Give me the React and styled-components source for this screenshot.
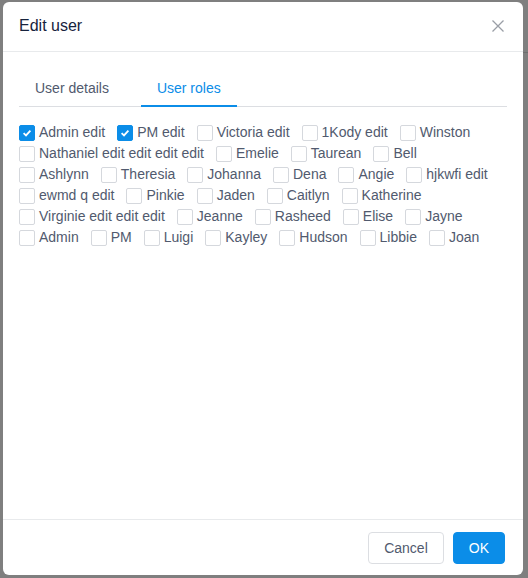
import React from 'react';
import styled, { createGlobalStyle } from 'styled-components';

const roles = [
    { name: 'Admin edit', checked: true },
    { name: 'PM edit', checked: true },
    { name: 'Victoria edit' },
    { name: '1Kody edit' },
    { name: 'Winston' },
    { name: 'Nathaniel edit edit edit edit' },
    { name: 'Emelie' },
    { name: 'Taurean' },
    { name: 'Bell' },
    { name: 'Ashlynn' },
    { name: 'Theresia' },
    { name: 'Johanna' },
    { name: 'Dena' },
    { name: 'Angie' },
    { name: 'hjkwfi edit' },
    { name: 'ewmd q edit' },
    { name: 'Pinkie' },
    { name: 'Jaden' },
    { name: 'Caitlyn' },
    { name: 'Katherine' },
    { name: 'Virginie edit edit edit' },
    { name: 'Jeanne' },
    { name: 'Rasheed' },
    { name: 'Elise' },
    { name: 'Jayne' },
    { name: 'Admin' },
    { name: 'PM' },
    { name: 'Luigi' },
    { name: 'Kayley' },
    { name: 'Hudson' },
    { name: 'Libbie' },
    { name: 'Joan' },
];

const App = () => {
    return (
        <Page>
            <GlobalStyle />
            <Modal>
                <Header>
                    <Title>Edit user</Title>
                    <Close aria-label="close">
                        <svg width="14" height="14" viewBox="0 0 14 14">
                            <path d="M1.5 1.5 L12.5 12.5 M12.5 1.5 L1.5 12.5" stroke="#9a9ea6" strokeWidth="1.3" fill="none" />
                        </svg>
                    </Close>
                </Header>
                <Body>
                    <Tabs>
                        <Tab>User details</Tab>
                        <Tab active>User roles</Tab>
                    </Tabs>
                    <RoleList>
                        {roles.map((r) => (
                            <Role key={r.name}>
                                <Box checked={r.checked}>
                                    {r.checked && (
                                        <svg width="10" height="10" viewBox="0 0 10 10">
                                            <path d="M1.6 5.2 L4 7.4 L8.4 2.6" stroke="#fff" strokeWidth="1.8" fill="none" />
                                        </svg>
                                    )}
                                </Box>
                                <Label>{r.name}</Label>
                            </Role>
                        ))}
                    </RoleList>
                </Body>
                <Footer>
                    <Button>Cancel</Button>
                    <Button primary>OK</Button>
                </Footer>
            </Modal>
            <EdgeLine />
        </Page>
    )
}

const GlobalStyle = createGlobalStyle`
    html, body {
        margin: 0;
        padding: 0;
        background: #7f7f7f;
    }
    body {
        font-family: 'Liberation Sans', Arial, sans-serif;
    }
`

const Page = styled.div`
    position: relative;
    width: 528px;
    height: 578px;
    background: #7f7f7f;
    padding: 2px 0 0 3px;
    box-sizing: border-box;
    overflow: hidden;
`
const EdgeLine = styled.div`
    position: absolute;
    top: 52px;
    right: 0;
    width: 5px;
    height: 1px;
    background: #6e6e6e;
`
const Modal = styled.div`
    width: 520px;
    height: 573px;
    background: #fff;
    border-radius: 6px;
    display: flex;
    flex-direction: column;
    box-sizing: border-box;
`
const Header = styled.div`
    display: flex;
    align-items: center;
    justify-content: space-between;
    padding: 12px 16px 13px;
    border-bottom: 1px solid #e8eaec;
`
const Title = styled.div`
    font-size: 16px;
    line-height: 24px;
    color: #17233d;
`
const Close = styled.div`
    width: 14px;
    height: 14px;
    margin-right: 2px;
    display: flex;
`
const Body = styled.div`
    flex: 1;
    padding: 18px 16px;
`
const Tabs = styled.div`
    display: flex;
    border-bottom: 1px solid #dcdee2;
`
const Tab = styled.div`
    padding: 9px 16px 8px;
    margin-right: 16px;
    font-size: 14px;
    line-height: 18px;
    color: ${p => p.active ? '#0b8de8' : '#515a6e'};
    border-bottom: 2px solid ${p => p.active ? '#0b8de8' : 'transparent'};
    margin-bottom: -1px;
`
const RoleList = styled.div`
    display: flex;
    flex-wrap: wrap;
    padding-top: 15px;
`
const Role = styled.label`
    display: flex;
    align-items: center;
    height: 21px;
    margin-right: 12px;
`
const Box = styled.span`
    width: 16px;
    height: 16px;
    box-sizing: border-box;
    border-radius: 2px;
    border: 1px solid ${p => p.checked ? '#0b8de8' : '#d5d8dd'};
    background: ${p => p.checked ? '#0b8de8' : '#fff'};
    display: flex;
    align-items: center;
    justify-content: center;
    margin-right: 4px;
`
const Label = styled.span`
    font-size: 14px;
    line-height: 21px;
    color: #515a6e;
    white-space: nowrap;
`
const Footer = styled.div`
    display: flex;
    justify-content: flex-end;
    gap: 9px;
    padding: 12px 18px 11px 16px;
    border-top: 1px solid #e8eaec;
`
const Button = styled.button`
    height: 32px;
    padding: 0 15px;
    font-family: 'Liberation Sans', Arial, sans-serif;
    font-size: 14px;
    border-radius: 4px;
    border: 1px solid ${p => p.primary ? '#0b8de8' : '#dcdee2'};
    background: ${p => p.primary ? '#0b8de8' : '#fff'};
    color: ${p => p.primary ? '#fff' : '#515a6e'};
`

export default App;
